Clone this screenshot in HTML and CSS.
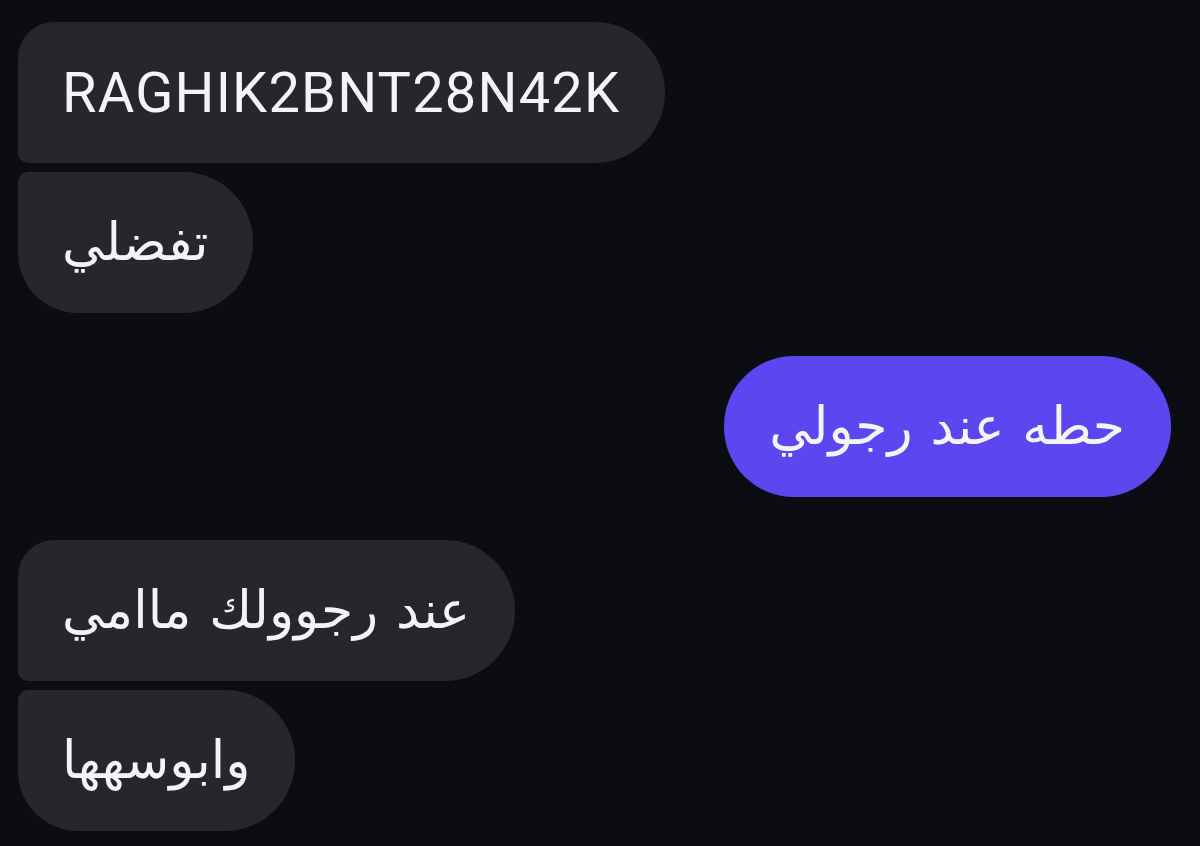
FILE: index.html
```html
<!DOCTYPE html>
<html lang="en">
<head>
  <meta charset="UTF-8">
  <meta name="viewport" content="width=device-width, initial-scale=1.0">
  <title>Chat</title>
  <link rel="stylesheet" href="styles.css">
</head>
<body>

<div class="chat">
  <!-- incoming group 1 -->
  <div class="group">
    <div class="bubble in first latin">RAGHIK2BNT28N42K</div>
    <div class="bubble in last" dir="rtl">تفضلي</div>
  </div>

  <!-- outgoing -->
  <div class="group out-group">
    <div class="bubble out" dir="rtl">حطه عند رجولي</div>
  </div>

  <!-- incoming group 2 -->
  <div class="group">
    <div class="bubble in first" dir="rtl">عند رجوولك ماامي</div>
    <div class="bubble in last" dir="rtl">وابوسهها</div>
  </div>
</div>

</body>
</html>
```

FILE: styles.css
```css
body {
  margin: 0;
  padding: 0;
  background-color: #0b0d12;
  font-family: 'Roboto', 'DejaVu Sans', sans-serif;
  color: #f4f4f6;
}

.chat {
  display: flex;
  flex-direction: column;
  gap: 43px;
  padding: 22px 29px 0 18px;
}

.group {
  display: flex;
  flex-direction: column;
  align-items: flex-start;
  gap: 9px;
}

.out-group {
  align-items: flex-end;
}

.bubble {
  height: 141px;
  box-sizing: border-box;
  display: flex;
  align-items: center;
  padding: 0 45px 0 44px;
  font-size: 52px;
  word-spacing: 5px;
  border-radius: 70px;
}

.latin {
  font-size: 56px;
  letter-spacing: 1.2px;
  word-spacing: 0;
}

.in {
  background-color: #25272b;
}

.in.first {
  border-radius: 36px 70px 70px 10px;
}

.in.last {
  border-radius: 10px 70px 70px 60px;
}

.out {
  background-color: #5d45ef;
  padding: 0 46px 0 45px;
}
```
